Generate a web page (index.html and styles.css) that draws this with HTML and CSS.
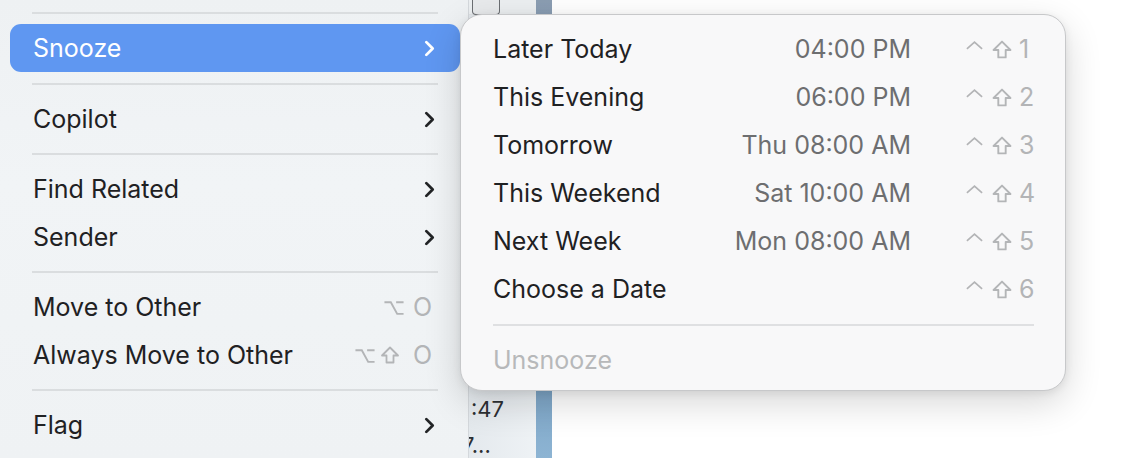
FILE: index.html
```html
<!DOCTYPE html>
<html>
<head>
<meta charset="utf-8">
<link rel="stylesheet" href="styles.css">
</head>
<body>
<div class="scene">
  <div class="menu">
    <div class="sep"></div>
    <div class="item active"><span class="label">Snooze</span><svg class="chev" viewBox="0 0 10 16"><path d="M2 2 L8 8 L2 14"/></svg></div>
    <div class="sep first"></div>
    <div class="item"><span class="label">Copilot</span><svg class="chev" viewBox="0 0 10 16"><path d="M2 2 L8 8 L2 14"/></svg></div>
    <div class="sep"></div>
    <div class="item"><span class="label">Find Related</span><svg class="chev" viewBox="0 0 10 16"><path d="M2 2 L8 8 L2 14"/></svg></div>
    <div class="item"><span class="label">Sender</span><svg class="chev" viewBox="0 0 10 16"><path d="M2 2 L8 8 L2 14"/></svg></div>
    <div class="sep"></div>
    <div class="item"><span class="label">Move to Other</span>
      <span class="keys">
        <svg class="k-opt wide" viewBox="0 0 20 16"><path d="M1 3 H7 L13 14 H19 M12 3 H19"/></svg>
        <span class="k-char">O</span>
      </span>
    </div>
    <div class="item"><span class="label">Always Move to Other</span>
      <span class="keys">
        <svg class="k-opt" viewBox="0 0 20 16"><path d="M1 3 H7 L13 14 H19 M12 3 H19"/></svg>
        <svg class="k-shift" viewBox="0 0 20 18"><path d="M10 1.5 L18 9.5 H13.5 V16.5 H6.5 V9.5 H2 Z"/></svg>
        <span class="k-char">O</span>
      </span>
    </div>
    <div class="sep"></div>
    <div class="item"><span class="label">Flag</span><svg class="chev" viewBox="0 0 10 16"><path d="M2 2 L8 8 L2 14"/></svg></div>
  </div>
  <div class="strip">
    <div class="strip-top"><div class="btn"></div></div>
    <div class="strip-fill"></div>
    <div class="strip-text">:47</div>
    <div class="strip-text second">7...</div>
  </div>
  <div class="bluebar"></div>
  <div class="blank"></div>

  <div class="submenu">
    <div class="srow"><span class="slabel">Later Today</span><span class="stime">04:00 PM</span>
      <span class="skeys"><svg class="k-ctrl" viewBox="0 0 20 10"><path d="M2 9 L10 2 L18 9"/></svg><svg class="k-shift" viewBox="0 0 20 18"><path d="M10 1.5 L18 9.5 H13.5 V16.5 H6.5 V9.5 H2 Z"/></svg><span class="k-num">1</span></span></div>
    <div class="srow"><span class="slabel">This Evening</span><span class="stime">06:00 PM</span>
      <span class="skeys"><svg class="k-ctrl" viewBox="0 0 20 10"><path d="M2 9 L10 2 L18 9"/></svg><svg class="k-shift" viewBox="0 0 20 18"><path d="M10 1.5 L18 9.5 H13.5 V16.5 H6.5 V9.5 H2 Z"/></svg><span class="k-num">2</span></span></div>
    <div class="srow"><span class="slabel">Tomorrow</span><span class="stime">Thu 08:00 AM</span>
      <span class="skeys"><svg class="k-ctrl" viewBox="0 0 20 10"><path d="M2 9 L10 2 L18 9"/></svg><svg class="k-shift" viewBox="0 0 20 18"><path d="M10 1.5 L18 9.5 H13.5 V16.5 H6.5 V9.5 H2 Z"/></svg><span class="k-num">3</span></span></div>
    <div class="srow"><span class="slabel">This Weekend</span><span class="stime">Sat 10:00 AM</span>
      <span class="skeys"><svg class="k-ctrl" viewBox="0 0 20 10"><path d="M2 9 L10 2 L18 9"/></svg><svg class="k-shift" viewBox="0 0 20 18"><path d="M10 1.5 L18 9.5 H13.5 V16.5 H6.5 V9.5 H2 Z"/></svg><span class="k-num">4</span></span></div>
    <div class="srow"><span class="slabel">Next Week</span><span class="stime">Mon 08:00 AM</span>
      <span class="skeys"><svg class="k-ctrl" viewBox="0 0 20 10"><path d="M2 9 L10 2 L18 9"/></svg><svg class="k-shift" viewBox="0 0 20 18"><path d="M10 1.5 L18 9.5 H13.5 V16.5 H6.5 V9.5 H2 Z"/></svg><span class="k-num">5</span></span></div>
    <div class="srow"><span class="slabel">Choose a Date</span><span class="stime"></span>
      <span class="skeys"><svg class="k-ctrl" viewBox="0 0 20 10"><path d="M2 9 L10 2 L18 9"/></svg><svg class="k-shift" viewBox="0 0 20 18"><path d="M10 1.5 L18 9.5 H13.5 V16.5 H6.5 V9.5 H2 Z"/></svg><span class="k-num">6</span></span></div>
    <div class="ssep"></div>
    <div class="srow disabled"><span class="slabel">Unsnooze</span></div>
  </div>
</div>
</body>
</html>
```

FILE: styles.css
```css
* { box-sizing: border-box; }
html, body { margin: 0; padding: 0; }
body {
  width: 1140px;
  height: 458px;
  overflow: hidden;
  background: #ffffff;
  font-family: Inter, "Liberation Sans", sans-serif;
  font-size: 25px;
  color: #222426;
}
.scene {
  position: relative;
  display: flex;
  width: 1140px;
  height: 458px;
}

/* left menu */
.menu {
  width: 469px;
  height: 458px;
  flex: none;
  padding: 2px 8px 0 10px;
  background: linear-gradient(180deg, #eef1f3 0%, #f1f4f6 40%, #eff2f4 100%);
  border-right: 1px solid #d4d8dc;
}
.sep {
  height: 22px;
  display: flex;
  align-items: center;
  padding: 0 22px;
}
.sep.first { height: 23px; }
.sep::before {
  content: "";
  flex: 1;
  height: 2px;
  background: #dadddf;
}
.item {
  height: 48px;
  display: flex;
  align-items: center;
  padding: 0 25px 0 23px;
  border-radius: 11px;
  color: #1f2123;
}
.item .label { flex: 1; }
.item.active {
  background: #5f97f1;
  color: #ffffff;
}
.chev {
  width: 11px;
  height: 17px;
  fill: none;
  stroke: #222426;
  stroke-width: 2.6;
  stroke-linecap: round;
  stroke-linejoin: round;
}
.active .chev { stroke: #ffffff; }
.keys {
  display: flex;
  align-items: center;
  color: #b3b5b7;
  margin-right: 3px;
}
.k-opt {
  width: 22px;
  height: 17px;
  fill: none;
  stroke: #b3b5b7;
  stroke-width: 1.8;
  margin-right: 4px;
}
.k-opt.wide { margin-right: 8px; }
.k-shift {
  width: 20px;
  height: 18px;
  fill: none;
  stroke: #b3b5b7;
  stroke-width: 1.8;
  stroke-linejoin: round;
}
.keys .k-shift { margin-right: 13px; }
.k-char { font-size: 25px; }

/* background window strip */
.strip {
  width: 67px;
  flex: none;
  background: linear-gradient(90deg, #e4e9ed, #eef2f5);
  overflow: hidden;
}
.strip-top {
  height: 15px;
  display: flex;
  background: #eceff1;
  border-bottom: 1px solid #e0e3e6;
}
.btn {
  width: 28px;
  height: 15px;
  margin-left: 3px;
  border: 1.5px solid #6b6e72;
  border-top: none;
  border-radius: 0 0 4px 4px;
  background: #e8eaec;
}
.strip-fill { height: 383px; }
.strip-text {
  font-size: 22px;
  color: #2d3033;
  line-height: 30px;
  margin-left: 2px;
  margin-top: -4px;
  white-space: nowrap;
}
.strip-text.second {
  margin-left: -7px;
  margin-top: 6px;
}
.bluebar {
  width: 16px;
  flex: none;
  background: linear-gradient(180deg, #8b9db2 0%, #7b9bb8 30%, #6e97ba 70%, #8db4d3 100%);
}
.blank { flex: 1; background: #ffffff; }

/* submenu */
.submenu {
  position: absolute;
  left: 460px;
  top: 14px;
  width: 606px;
  height: 377px;
  padding: 10px 31px 0 32px;
  background: #f8f8f9;
  border: 1px solid #c7c8ca;
  border-radius: 22px;
  box-shadow: 0 12px 36px rgba(0, 0, 0, 0.16), 0 2px 8px rgba(0, 0, 0, 0.08);
}
.srow {
  height: 48px;
  display: flex;
  align-items: center;
  color: #1f2123;
}
.slabel { flex: 1; }
.stime {
  color: #6d6e70;
  text-align: right;
}
.skeys {
  width: 69px;
  margin-left: 54px;
  display: flex;
  align-items: center;
  color: #b3b4b6;
}
.k-ctrl {
  width: 19px;
  height: 10px;
  fill: none;
  stroke: #b3b4b6;
  stroke-width: 1.8;
  margin-right: 7px;
  margin-top: -8px;
  flex: none;
}
.skeys .k-shift { width: 22px; height: 19px; margin-right: 6px; flex: none; }
.k-num { font-size: 25px; }
.ssep {
  height: 23px;
  display: flex;
  align-items: center;
}
.ssep::before {
  content: "";
  flex: 1;
  height: 2px;
  background: #dfe0e2;
}
.srow.disabled { color: #b7b8ba; }
```
